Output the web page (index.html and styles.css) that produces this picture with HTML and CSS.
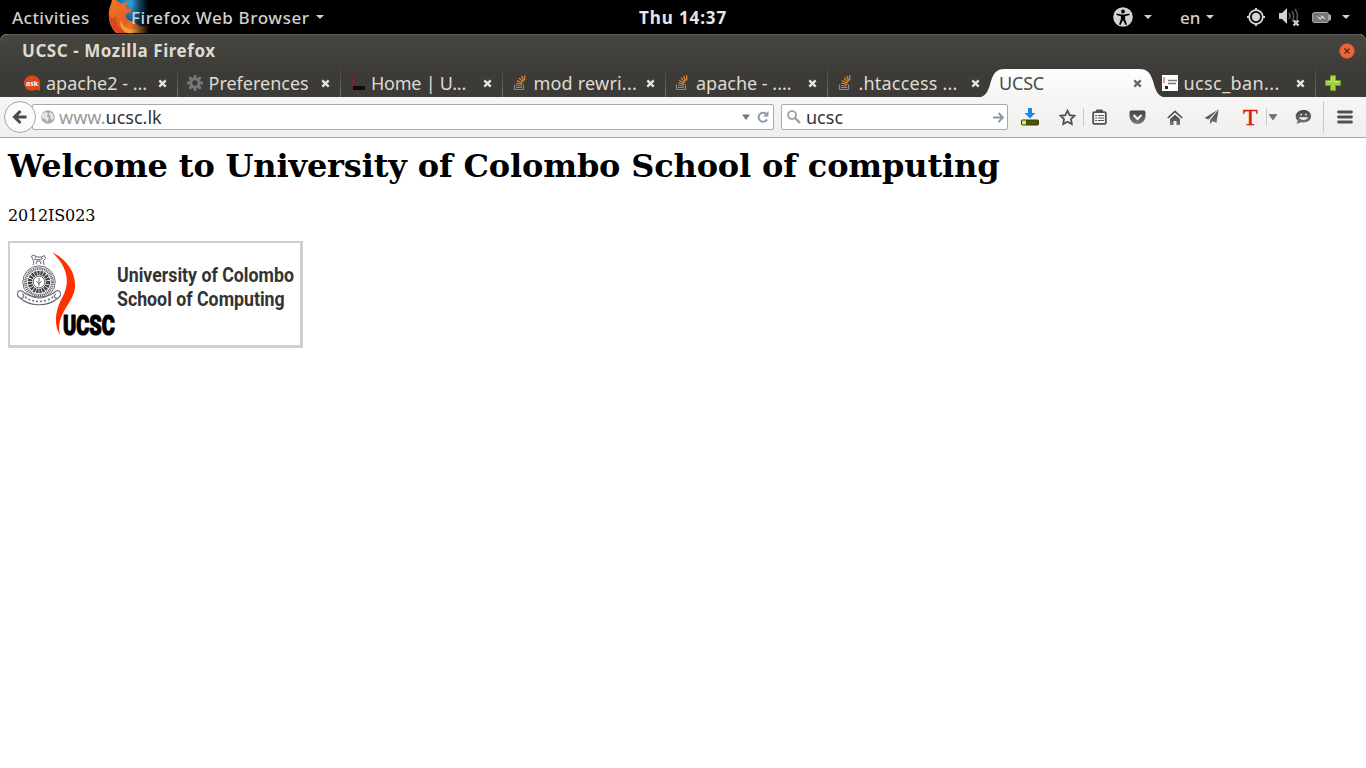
FILE: index.html
```html
<!DOCTYPE html>
<html lang="en">
<head>
<meta charset="utf-8">
<title>UCSC</title>
<link rel="stylesheet" href="styles.css">
</head>
<body>
<svg width="0" height="0" class="defs">
  <defs>
    <linearGradient id="gray" x1="0" y1="0" x2="0" y2="1"><stop offset="0" stop-color="#444"/><stop offset="1" stop-color="#777"/></linearGradient>
    <linearGradient id="tabfill" x1="0" y1="0" x2="0" y2="1"><stop offset="0" stop-color="#fff"/><stop offset="1" stop-color="#f6f5f4"/></linearGradient>
    <symbol id="x" viewBox="0 0 9 9"><path d="M1.3 1.3l6.4 6.4M7.7 1.3L1.3 7.7" stroke="currentColor" stroke-width="2.4" fill="none"/></symbol>
    <symbol id="down" viewBox="0 0 8 4"><path d="M0 0h8L4 4z" fill="currentColor"/></symbol>
    <symbol id="stack" viewBox="0 0 16 16">
      <path d="M2.500 9.500v5h9v-5M4 12.500h6" fill="none" stroke="#8b8b88" stroke-width="1.100"/>
      <path d="M4 10.500l6 .5" stroke="#a08050"/><path d="M4.200 8l6 1.500M5 5.500l5.500 2.800M7 2.800l4.200 4.300M9.600 1l2.200 5M12.600.3l.2 5" stroke="#e58a2d" stroke-width="1.200"/>
    </symbol>
  </defs>
</svg>

<header class="panel">
  <span class="activities">Activities</span>
  <svg class="fox" width="46" height="34" viewBox="0 0 46 34">
    <defs>
      <linearGradient id="fade"><stop offset=".5" stop-color="#fff"/><stop offset=".9" stop-color="#000"/></linearGradient>
      <mask id="m"><rect width="46" height="34" fill="url(#fade)"/></mask>
      <radialGradient id="globe" cx=".5" cy=".25" r=".65"><stop offset="0" stop-color="#2da7df"/><stop offset="1" stop-color="#0a3268"/></radialGradient>
      <linearGradient id="fur" x1="0" y1="0" x2="1" y2="1"><stop offset="0" stop-color="#f07a28"/><stop offset=".5" stop-color="#e65b22"/><stop offset="1" stop-color="#f5a52e"/></linearGradient>
    </defs>
    <g mask="url(#m)">
      <circle cx="23" cy="13" r="20" fill="url(#globe)"/>
      <path d="M4 0L3 4C-1 13 0 25 8 33h32c4-5 5-10 5-14-5 9-13 9-17 4l-4-2c-4 0-7-3-6-7l5-2 1-3-6-1c0-3 1-5 3-6-4 0-7 1-8 2L8 0z" fill="url(#fur)"/>
      <path d="M1 14c0 9 4 15 9 19h12C12 31 7 23 8 16l-4 3z" fill="#d94523"/>
      <path d="M13 20c2 9 11 12 20 8-3 5-10 6-14 5-5-2-8-8-6-13z" fill="#f39a30"/>
    </g>
  </svg>
  <span class="app">Firefox Web Browser</span><svg class="app-arrow" width="8" height="4"><use href="#down"/></svg>
  <span class="clock">Thu 14:37</span>
  <div class="status">
    <svg width="20" height="20" viewBox="0 0 20 20"><circle cx="10" cy="10" r="9.800" fill="#d3d3d0"/><circle cx="10" cy="4.500" r="1.900"/><path d="M3.500 6.500l5 1h3l5-1v1.600l-4.400 1.200v3L14 17.500l-1.500.6L10 13l-2.500 5.100-1.500-.6 1.900-5.200v-3L3.500 8.100z"/></svg>
    <svg class="s-a" width="8" height="4"><use href="#down"/></svg>
    <span class="lang">en</span>
    <svg class="s-b" width="8" height="4"><use href="#down"/></svg>
    <svg class="s-c" width="18" height="18" viewBox="0 0 18 18"><circle cx="9" cy="9" r="6.800" fill="none" stroke="#d3d3d0" stroke-width="1.800"/><circle cx="9" cy="9" r="4.200" fill="#d3d3d0"/><path d="M9 0v3M9 15v3M0 9h3M15 9h3" stroke="#d3d3d0" stroke-width="2"/></svg>
    <svg class="s-d" width="21" height="20" viewBox="0 0 21 20"><path d="M0 6h3l5-5v16l-5-5H0z" fill="#d3d3d0"/><path d="M10 6q2 3 0 6M13 4q3.500 5 0 10M16 2q5 7 0 13" fill="none" stroke="#555" stroke-width="1.600"/><path d="M14.500 13.500l5 5M19.500 13.500l-5 5" stroke="#d3d3d0" stroke-width="2.200"/></svg>
    <svg class="s-e" width="19" height="11" viewBox="0 0 19 11"><rect x=".5" y=".5" width="16" height="10" rx="2" fill="#777" stroke="#aaa"/><path d="M17 3h1.500v5H17" fill="#aaa" stroke="#aaa"/><path d="M4 4l5 2 .5-3L14 7 9.500 5.800 8.500 8z" fill="#ddd"/></svg>
    <svg class="s-f" width="8" height="4"><use href="#down"/></svg>
  </div>
</header>

<section class="frame">
  <div class="titlebar">
    <span>UCSC - Mozilla Firefox</span>
    <svg width="16" height="16" viewBox="0 0 16 16"><circle cx="8" cy="8" r="7.500" fill="#ee643b" stroke="#b5492a" stroke-width=".6"/><path d="M5.500 5.500l5 5M10.500 5.500l-5 5" stroke="#562617" stroke-width="1.200"/></svg>
  </div>
  <nav class="tabs">
    <div class="tab"><svg class="ico" viewBox="0 0 16 16"><path d="M16 15.500l-4-.8A8 7.700 0 1 1 16 8z" fill="#dd4814"/><text x="2" y="10.500" class="ask">ask</text></svg><span class="label">apache2 - ...</span><svg class="close"><use href="#x"/></svg></div>
    <div class="tab"><svg class="ico" viewBox="0 0 16 16"><circle cx="8" cy="8" r="4.200" fill="none" stroke="#75777b" stroke-width="3"/><path d="M8 0v3.500M8 12.500V16M0 8h3.500M12.500 8H16M2.300 2.300l2.500 2.500M11.200 11.200l2.500 2.500M13.700 2.300l-2.500 2.500M4.800 11.200l-2.500 2.500" stroke="#75777b" stroke-width="2.800"/></svg><span class="label">Preferences</span><svg class="close"><use href="#x"/></svg></div>
    <div class="tab"><svg class="ico" viewBox="0 0 16 16"><path d="M1.500 1c5 3 4 6 2 9-1.500 2-1 4-.5 5" fill="none" stroke="#8c1c22" stroke-width="1.500"/><path d="M4 11h12v4H4z" fill="#0c0c0c"/></svg><span class="label tight">Home | U...</span><svg class="close"><use href="#x"/></svg></div>
    <div class="tab"><svg class="ico"><use href="#stack"/></svg><span class="label wide">mod rewri...</span><svg class="close"><use href="#x"/></svg></div>
    <div class="tab"><svg class="ico"><use href="#stack"/></svg><span class="label">apache - ....</span><svg class="close"><use href="#x"/></svg></div>
    <div class="tab last"><svg class="ico"><use href="#stack"/></svg><span class="label wide">.htaccess ...</span><svg class="close"><use href="#x"/></svg></div>
    <div class="tab active"><svg class="shape" width="192" height="29" viewBox="0 0 192 29"><path d="M0 29C11 28 12 22 15 12 18 3 21 0 29 0H163C171 0 174 3 177 12 180 22 181 28 192 29z" fill="url(#tabfill)"/></svg><span class="label">UCSC</span><svg class="close"><use href="#x"/></svg></div>
    <div class="tab"><svg class="ico" viewBox="0 0 16 16"><path d="M0 0h16v16H0z" fill="#fff"/><path d="M2 2v6" stroke="#d77" stroke-width="1.500"/><path d="M6 5.500h9M6 8.500h8" stroke="#777" stroke-width="1.400"/><path d="M3 11h3v3H3z" fill="#222"/></svg><span class="label ban">ucsc_ban...</span><svg class="close"><use href="#x"/></svg></div>
    <svg class="plus" width="16" height="16" viewBox="0 0 16 16"><path d="M5.500.5h5v5h5v5h-5v5h-5v-5h-5v-5h5z" fill="#a5cf43" stroke="#6d9d24"/><path d="M6.500 2v4.500H2M9.500 2v4.500H14" stroke="#cfe884" fill="none"/></svg>
  </nav>
</section>

<section class="toolbar">
  <div class="back"><svg width="16" height="16" viewBox="0 0 16 16"><path d="M8.500 2L2.500 8l6 6M2.500 8H14.500" fill="none" stroke="#4b4b4b" stroke-width="3"/></svg></div>
  <div class="url">
    <svg width="14" height="14" viewBox="0 0 14 14"><circle cx="7" cy="7" r="6.800" fill="#aaa"/><path d="M2 3l3-1 2 1-1 3 2 2-2 4-2-3-3-1V5zM8 2l4 2 1 4-2 2-2-2 1-2-2-1z" fill="#e5e5e5"/></svg>
    <span class="address"><i>www.</i>ucsc.lk</span>
    <svg class="u-down" width="8" height="6" viewBox="0 0 8 6"><path d="M0 .5h8L4 6z" fill="#777"/></svg>
    <svg width="12" height="12" viewBox="0 0 12 12"><path d="M9 2.800A4.500 4.500 0 1 0 10 8.500" fill="none" stroke="#8d99a8" stroke-width="2"/><path d="M11.500 0v5.500H6z" fill="#8d99a8"/></svg>
  </div>
  <div class="search">
    <svg width="14" height="14" viewBox="0 0 14 14"><circle cx="5" cy="5" r="4" fill="none" stroke="#999" stroke-width="1.700"/><path d="M8 8l5 5" stroke="#999" stroke-width="2.300"/></svg>
    <span>ucsc</span>
    <svg width="11" height="11" viewBox="0 0 11 11"><path d="M0 5.500h9.500M5.500 1l4.500 4.500L5.500 10" fill="none" stroke="#8795a5" stroke-width="1.800"/></svg>
  </div>
  <div class="tools">
    <svg width="18" height="18" viewBox="0 0 18 18"><path d="M7 0h4v5h3.500L9 10.500 3.500 5H7z" fill="#1989f0"/><rect x=".5" y="12" width="17" height="5" rx="1" fill="#4d5500" stroke="#383e00"/><path d="M1 12.500h4v4H1z" fill="#d7e65b"/></svg>
    <svg class="g1" width="17" height="17" viewBox="0 0 17 17"><path d="M8.500 1.700l2.100 4.400 4.900.7L12 10.100l.8 4.900-4.300-2.300L4.200 15l.8-4.900L1.500 6.800l4.900-.7z" fill="none" stroke="#505050" stroke-width="1.800"/></svg>
    <b class="line"></b>
    <svg class="g2" width="15" height="16" viewBox="0 0 15 16"><path d="M4.500 3V1h6v2" fill="#555" stroke="#505050"/><rect x="1.200" y="3.200" width="12.600" height="11.600" rx="1" fill="#f8f8f8" stroke="#505050" stroke-width="1.800"/><path d="M3.200 6.500h1.800M6 6.500h6M3.200 9h1.800M6 9h6M3.200 11.500h1.800M6 11.500h6" stroke="#555" stroke-width="1.200"/></svg>
    <svg class="g3" width="17" height="15" viewBox="0 0 17 15"><path d="M2 .5h13q1.500 0 1.500 2V6a8 8 0 0 1-16 0V2.500Q.5.5 2 .5z" fill="url(#gray)"/><path d="M4.500 5l4 4 4-4" fill="none" stroke="#f6f6f6" stroke-width="2"/></svg>
    <svg class="g4" width="16" height="15" viewBox="0 0 16 15"><path d="M.8 8L8 1.300 15.200 8" fill="none" stroke="#505050" stroke-width="1.700"/><path d="M3 9l5-4.300L13 9v6H9.500v-4h-3v4H3z" fill="url(#gray)"/></svg>
    <svg class="g5" width="15" height="16" viewBox="0 0 15 16"><path d="M14.500.5L.5 9l4 1.600zM14.500.5L6 11v4.500l2.300-3.200 4.200 1.400z" fill="url(#gray)"/><path d="M13.500 1.800L5.500 10" stroke="#eee" stroke-width=".8"/></svg>
    <span class="red">T</span>
    <b class="line l2"></b>
    <svg class="g6" width="8" height="6" viewBox="0 0 8 6"><path d="M0 .5h8L4 6z" fill="#777" stroke="#555" stroke-width=".5"/></svg>
    <svg class="g7" width="17" height="16" viewBox="0 0 17 16"><path d="M8.700 1C13 1 16 3.500 16 7.300s-3 6.200-7.300 6.200L6 13.300 1.500 15l1.200-3.500C1 10.500.7 9 .7 7.300.7 3.500 4.300 1 8.700 1z" fill="url(#gray)"/><path d="M5.300 5.500h1.700M10 5.500h1.700" stroke="#eee" stroke-width="1.400"/><path d="M4 8.200h9c-.5 3.600-8.500 3.600-9 0z" fill="#eee"/></svg>
    <b class="line l3"></b>
    <svg class="g8" width="16" height="14" viewBox="0 0 16 14"><path d="M1.500 2h13M1.500 7h13M1.500 12h13" stroke="#505050" stroke-width="2.800" stroke-linecap="round"/></svg>
  </div>
</section>

<main class="page">
  <h1>Welcome to University of Colombo School of computing</h1>
  <p>2012IS023</p>
  <svg class="logo" width="295" height="107" viewBox="0 0 295 107">
    <path d="M0 0h295v107H0z" fill="#cfcfcf"/><path d="M2 2h290v102H2z" fill="#fff"/>
    <g fill="none" stroke="#6a6e78">
      <path d="M25 24c1-2 1-4-.5-6l-1-3 3-1 2 2h5l3-1.500 1 3-2 2 .5 4.500M28 23l1-3h3l1 3M26 18l3 1 5-1M27 15l1 2M33 16l2 2" stroke-width="1"/>
      <circle cx="31" cy="41" r="16.200" stroke-width="1"/><circle cx="31" cy="41" r="13.500" stroke-width="3" stroke-dasharray="1.200 .7"/>
      <circle cx="31" cy="41" r="9" stroke="#444" stroke-width="4.500" stroke-dasharray="2.200 .7"/><circle cx="31" cy="41" r="5.800"/>
      <path d="M31 37v8M28.500 40l2.500 3 2.500-3" stroke-width="1"/>
      <path d="M14 50c-5-2-6 5-2 7 4 1 5-3 2-4M48 50c5-2 6 5 2 7-4 1-5-3-2-4M14 50c8 8 26 8 34 0M12 57c10 9 28 9 38 0" stroke-width="1.100"/>
      <path d="M17 56c8 6 20 6 28 0" stroke-width="1.600" stroke-dasharray="2 2"/>
    </g>
    <path d="M44 11C58 18 68 31 67 46 66 62 47 73 52 94 45 83 48 68 54 57 62 43 61 27 44 11z" fill="#fd3000"/>
    <g transform="translate(55 94) scale(.71 1)"><text class="ucsc">UCSC</text></g>
    <g transform="translate(109 41) scale(.845 1)"><text class="name">University of Colombo</text></g>
    <g transform="translate(109 65) scale(.845 1)"><text class="name">School of Computing</text></g>
  </svg>
</main>
</body>
</html>
```
FILE: styles.css
```css
* { box-sizing: border-box; }
body { margin: 0; width: 1366px; height: 768px; overflow: hidden; background: #fff; font-family: "Noto Sans", "Open Sans", sans-serif; font-size: 17px; }
svg { flex: none; display: block; }
span { white-space: nowrap; }
.defs { position: absolute; }
.panel { height: 34px; background: #000; color: #d0d0cd; display: flex; align-items: center; position: relative; font-weight: 500; }
.activities { margin-left: 12px; width: 96px; letter-spacing: .45px; }
.fox { margin-right: -23px; }
.app { position: relative; width: 178px; letter-spacing: .6px; }
.app-arrow { margin-left: 7px; }
.clock { position: absolute; left: 639px; font-weight: 700; color: #e6e6e6; letter-spacing: .9px; }
.status { margin-left: auto; padding-right: 16px; display: flex; align-items: center; }
.s-a { margin-left: 11px; }
.lang { margin-left: 28px; width: 21px; }
.s-b { margin-left: 5px; }
.s-c { margin-left: 33px; }
.s-d { margin-left: 14px; }
.s-e { margin-left: 12px; }
.s-f { margin-left: 11px; }

.frame { height: 63px; background: linear-gradient(#474641, #3d3b37 35px); border-top: 1px solid #5b5a55; border-radius: 7px 7px 0 0; box-shadow: 0 -7px 0 7px #000; clip-path: inset(0); }
.titlebar { height: 34px; padding: 0 11px 2px 22px; display: flex; align-items: center; justify-content: space-between; color: #dfdbd2; font-weight: 700; letter-spacing: .55px; }
.titlebar span { padding-bottom: 1px; }
.titlebar svg { width: 16px; }
.tabs { height: 28px; display: flex; padding-left: 15.5px; color: #dfdbd2; }
.tab { width: 162.5px; flex: none; display: flex; align-items: center; padding-left: 8.5px; position: relative; border-right: 1px solid; border-image: linear-gradient(#45433f, #75736b) 1; }
.tab.last, .tab.active { border-image: none; border-right-color: transparent; }
.ico { width: 16px; height: 16px; margin-right: 6px; }
.label { width: 112px; font-size: 18px; line-height: 26px; }
.tight { letter-spacing: -.25px; }
.wide { letter-spacing: .2px; }
.ban { letter-spacing: .4px; }
.close { width: 9px; height: 9px; color: #e5e3de; }
.shape { position: absolute; left: -15px; top: 0; }
.active { color: #4a4a4a; }
.active .label { position: relative; width: 134px; letter-spacing: -.2px; }
.active .close { position: relative; color: #666; }
.ask { font: 700 7px "Open Sans", sans-serif; fill: #fff; }
.plus { margin: 6px 0 0 9px; }

.toolbar { height: 41px; background: linear-gradient(#f7f6f5, #f0efed); border-bottom: 1px solid #aaa9a5; display: flex; align-items: center; padding-left: 4px; color: #333; font-size: 18px; }
.back { width: 32px; height: 32px; flex: none; border: 1px solid #9aa7b5; border-radius: 50%; background: #fbfbfb; display: grid; place-items: center; z-index: 1; }
.url, .search { height: 26px; border: 1px solid #aaa9a5; background: #fff; display: flex; align-items: center; border-radius: 2px; }
.url { width: 742px; margin-left: -4px; padding: 0 4px 0 8px; }
.address { margin-left: 4px; width: 683px; }
.address i { font-style: normal; color: #999; }
.u-down { margin-right: 7px; }
.search { margin-left: 7px; width: 227px; padding: 0 3px 0 5px; }
.search span { margin-left: 5px; flex: 1; }
.tools { margin-left: 13px; display: flex; align-items: center; }
.line { width: 1px; height: 18px; background: #c3cbd3; margin-left: 7px; }
.g1 { margin-left: 20px; }
.g2 { margin-left: 8px; }
.g3 { margin-left: 22px; }
.g4 { margin-left: 21px; }
.g5 { margin-left: 21px; }
.red { margin-left: 24px; width: 15px; font: 400 24px/24px "Liberation Serif", serif; color: #cf1e12; -webkit-text-stroke: .5px #cf1e12; }
.l2 { margin-left: 8px; }
.g6 { margin-left: 2px; }
.g7 { margin-left: 18px; }
.l3 { height: 32px; margin-left: 11px; }
.g8 { margin-left: 13px; }

.page { padding: 8px; font-family: "DejaVu Serif", serif; color: #000; }
.page h1 { margin: 1px 0 0; font-size: 32px; line-height: 38px; letter-spacing: -.155px; }
.page p { margin: 21px 0 16px; font-size: 16px; line-height: 19px; letter-spacing: -.15px; }
.ucsc { font: 900 28px Roboto, sans-serif; fill: #000; stroke: #000; stroke-width: 1.2px; }
.name { font: 700 21px Roboto, sans-serif; fill: #333; }
```
